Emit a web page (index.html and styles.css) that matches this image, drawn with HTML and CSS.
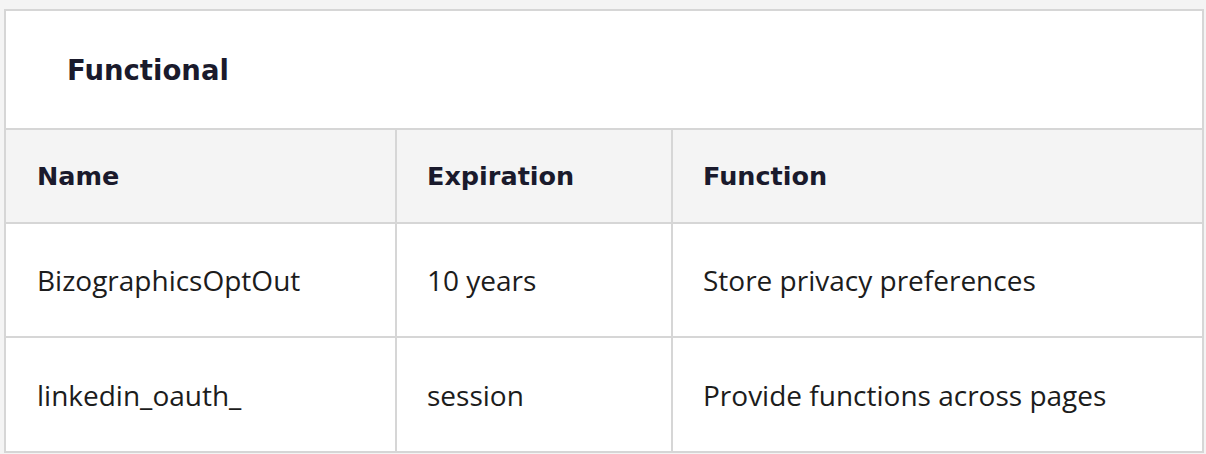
FILE: index.html
```html
<!DOCTYPE html>
<html lang="en">
<head>
<meta charset="utf-8">
<title>Functional cookies</title>
<link rel="stylesheet" href="styles.css">
</head>
<body>
<section class="card">
  <h2 class="card-title">Functional</h2>
  <div class="grid">
    <div class="cell head">Name</div>
    <div class="cell head sep">Expiration</div>
    <div class="cell head sep">Function</div>

    <div class="cell row">BizographicsOptOut</div>
    <div class="cell row sep">10 years</div>
    <div class="cell row sep">Store privacy preferences</div>

    <div class="cell row last">linkedin_oauth_</div>
    <div class="cell row last sep">session</div>
    <div class="cell row last sep">Provide functions across pages</div>
  </div>
</section>
</body>
</html>
```
FILE: styles.css
```css
html, body {
  margin: 0;
  padding: 0;
}
body {
  background: #f4f4f4;
  padding: 9px 2px 0 4px;
}
.card {
  width: 1200px;
  box-sizing: border-box;
  border: 2px solid #d6d6d6;
  background: #ffffff;
}
.card-title {
  margin: 0;
  height: 117px;
  display: flex;
  align-items: center;
  padding-left: 61px;
  border-bottom: 2px solid #d6d6d6;
  font-family: "DejaVu Sans", "Inter", sans-serif;
  font-weight: 700;
  font-size: 27.5px;
  color: #1a1a2c;
}
.grid {
  display: grid;
  grid-template-columns: 389px 276px 1fr;
}
.cell {
  display: flex;
  align-items: center;
  box-sizing: border-box;
  padding-left: 31px;
  border-bottom: 2px solid #d6d6d6;
}
.cell.sep {
  border-left: 2px solid #d6d6d6;
  padding-left: 30px;
}
.head {
  height: 94px;
  background: #f4f4f4;
  font-family: "DejaVu Sans", "Inter", sans-serif;
  font-weight: 700;
  font-size: 25.5px;
  color: #1a1a2c;
}
.row {
  height: 114px;
  font-family: "Open Sans", sans-serif;
  font-size: 28px;
  color: #1c1c1c;
}
.row.last {
  height: 113px;
  border-bottom: none;
}
```
